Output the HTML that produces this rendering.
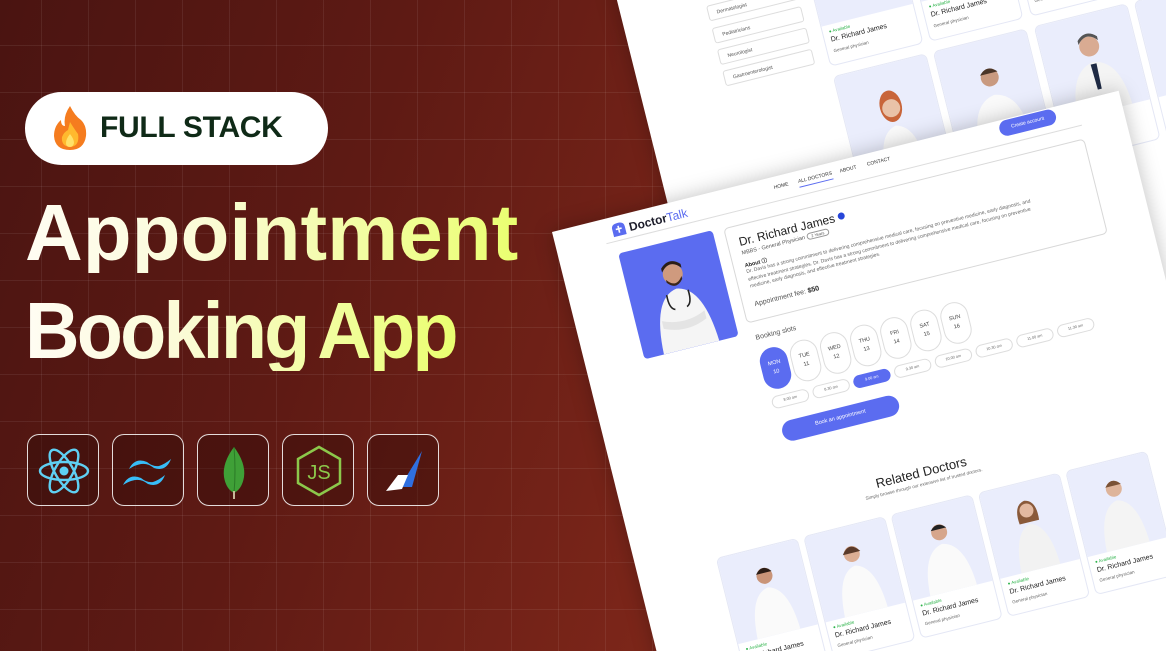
<!DOCTYPE html>
<html style="width:1166px;height:651px;overflow:hidden"><head><meta charset="utf-8">
<style>
*{margin:0;padding:0;box-sizing:border-box}
html,body{width:1166px;height:651px;overflow:hidden}
body{position:relative;font-family:"Liberation Sans",sans-serif}
.wrap{position:absolute;left:0;top:0;width:1166px;height:651px;overflow:hidden;
background:linear-gradient(110deg,#4a1411 0%,#5e1a14 30%,#7a2519 60%,#8f3321 100%)}
.grid{position:absolute;inset:0;background-image:linear-gradient(rgba(255,255,255,.07) 1px,transparent 1px),linear-gradient(90deg,rgba(255,255,255,.07) 1px,transparent 1px);background-size:47px 47px;background-position:-6px -2px}
.badge{position:absolute;left:25px;top:92px;width:303px;height:73px;background:#fff;border-radius:37px}
.badge span{position:absolute;left:75px;top:19px;font-size:30px;font-weight:bold;color:#0f2a17;letter-spacing:-.3px}
.t{position:absolute;left:25px;font-size:80px;font-weight:bold;line-height:1;white-space:nowrap;
background:linear-gradient(90deg,#fffdf3 0%,#fbfbd8 35%,#eaff70 100%);-webkit-background-clip:text;background-clip:text;color:transparent}
.ic{position:absolute;top:434px;width:72px;height:72px;border:1.5px solid rgba(255,255,255,.85);border-radius:12px;background:rgba(40,8,6,.35)}
.ic svg{position:absolute;left:0;top:0}
.pg{position:absolute;background:#fff;transform-origin:0 0;transform:rotate(-14deg);font-family:"Liberation Sans",sans-serif;color:#222;box-shadow:0 0 20px rgba(0,0,0,.25);overflow:hidden}
.a{position:absolute}
.card{position:absolute;width:84px;height:128px;border:1px solid #e4e7f5;border-radius:6px;background:#fff;overflow:hidden}
.card .im{position:absolute;left:0;top:0;width:100%;height:88px;background:#eaedfc}
.card .av{position:absolute;left:6px;top:92px;font-size:4.5px;color:#2db34a}
.card .nm{position:absolute;left:6px;top:100px;font-size:7px;color:#222}
.card .sp{position:absolute;left:6px;top:111px;font-size:4.5px;color:#666}
.box{position:absolute;width:92px;height:16px;border:1px solid #ddd;border-radius:3px;font-size:5px;color:#555;padding:5px 8px}
.day{position:absolute;width:28px;height:42px;border:1px solid #ddd;border-radius:14px;font-size:5.5px;text-align:center;padding-top:11px;line-height:9px;color:#444}
.tm{position:absolute;width:38px;height:13px;border:1px solid #ddd;border-radius:7px;font-size:3.8px;text-align:center;line-height:11px;color:#666}
</style></head><body><div class="wrap">
<div class="grid"></div>

<!-- back page -->
<div class="pg" style="left:587px;top:-120px;width:900px;height:900px;">
  <div class="box" style="left:85px;top:128px">General physician</div>
  <div class="box" style="left:85px;top:151px">Dermatologist</div>
  <div class="box" style="left:85px;top:174px">Pediatricians</div>
  <div class="box" style="left:85px;top:196px">Neurologist</div>
  <div class="box" style="left:85px;top:218px">Gastroenterologist</div>
  <div class="card" style="left:191px;top:100px;width:96px;height:140px"><div class="im" style="height:98px"></div><div class="av" style="top:102px">● Available</div><div class="nm" style="top:110px">Dr. Richard James</div><div class="sp" style="top:122px">General physician</div></div>
  <div class="card" style="left:294px;top:100px;width:96px;height:140px"><div class="im" style="height:98px"></div><div class="av" style="top:102px">● Available</div><div class="nm" style="top:110px">Dr. Richard James</div><div class="sp" style="top:122px">General physician</div></div>
  <div class="card" style="left:398px;top:100px;width:96px;height:140px"><div class="im" style="height:98px"></div><div class="av" style="top:102px">● Available</div><div class="nm" style="top:110px">Dr. Richard James</div><div class="sp" style="top:122px">General physician</div></div>
  <div class="card" style="left:501px;top:100px;width:96px;height:140px"><div class="im" style="height:98px"></div></div>
  <div class="card" style="left:604px;top:100px;width:96px;height:140px"><div class="im" style="height:98px"></div></div>
  <div class="card" style="left:191px;top:250px;width:96px;height:140px"><div class="im" style="height:98px"><svg width="96" height="98" viewBox="0 0 96 98"><path d="M28 98 Q30 66 48 62 Q66 66 68 98Z" fill="#fafafa"/><ellipse cx="48" cy="42" rx="11" ry="16" fill="#c8653a"/><circle cx="48" cy="44" r="9" fill="#e9c2a8"/></svg></div></div>
  <div class="card" style="left:294px;top:250px;width:96px;height:140px"><div class="im" style="height:98px"><svg width="96" height="98" viewBox="0 0 96 98"><path d="M22 98 Q24 60 48 56 Q72 60 74 98Z" fill="#fafafa"/><circle cx="48" cy="38" r="9" fill="#c99a80"/><path d="M39 34 Q48 24 57 34Z" fill="#4a3528"/></svg></div></div>
  <div class="card" style="left:398px;top:250px;width:96px;height:140px"><div class="im" style="height:98px"><svg width="96" height="98" viewBox="0 0 96 98"><path d="M20 98 Q22 52 48 48 Q74 52 76 98Z" fill="#f4f4f4"/><path d="M45 50 L51 50 L50 76 L46 76Z" fill="#1e2a44"/><circle cx="48" cy="32" r="10" fill="#d9ab92"/><path d="M38 28 Q48 16 58 28 L58 24 Q48 14 38 24Z" fill="#555"/></svg></div><div class="av" style="top:102px">● Available</div><div class="nm" style="top:110px">Dr. Richard James</div></div>
  <div class="card" style="left:501px;top:250px;width:96px;height:140px"><div class="im" style="height:98px"></div><div class="av" style="top:102px">● Available</div><div class="nm" style="top:110px">Dr. Richard James</div></div>
  <div class="card" style="left:604px;top:250px;width:96px;height:140px"><div class="im" style="height:98px"></div></div>
  <div class="card" style="left:604px;top:400px;width:96px;height:140px"><div class="im" style="height:98px"></div><div class="av" style="top:102px">● Available</div><div class="nm" style="top:110px">Dr. Richard James</div></div>
  <div class="card" style="left:604px;top:550px;width:96px;height:140px"><div class="im" style="height:98px"></div></div>
</div>

<!-- front page -->
<div class="pg" style="left:552px;top:232px;width:584px;height:720px;">
  <svg class="a" style="left:58px;top:6px" width="15" height="15" viewBox="0 0 15 15"><path d="M1 6 Q1 1 7.5 1 Q14 1 14 6 L14 14 L1 14Z" fill="#5b6cf0"/><path d="M7.5 4 V11 M4.5 7 H10.5" stroke="#fff" stroke-width="1.6"/></svg>
  <div class="a" style="left:76px;top:7px;font-size:12px;font-weight:bold;color:#1d1d2b">Doctor<span style="color:#5b6cf0;font-weight:normal">Talk</span></div>
  <div class="a" style="left:226px;top:8px;font-size:5px;color:#333">HOME</div>
  <div class="a" style="left:251px;top:8px;font-size:5px;color:#333;border-bottom:1px solid #5b6cf0;padding-bottom:2px">ALL DOCTORS</div>
  <div class="a" style="left:294px;top:8px;font-size:5px;color:#333">ABOUT</div>
  <div class="a" style="left:322px;top:8px;font-size:5px;color:#333">CONTACT</div>
  <div class="a" style="left:459px;top:1px;width:58px;height:16px;border-radius:8px;background:#5b6cf0;color:#fff;font-size:5px;text-align:center;line-height:16px">Create account</div>
  <div class="a" style="left:50px;top:24px;width:490px;height:1px;background:#ddd"></div>

  <div class="a" style="left:59px;top:37px;width:97px;height:109px;background:#5b6cf0;border-radius:4px;overflow:hidden">
    <svg width="97" height="109" viewBox="0 0 97 109"><path d="M20 109 Q22 52 48 48 Q74 52 77 109Z" fill="#f5f5f5"/><path d="M26 76 Q48 86 70 76 L70 84 Q48 94 26 84Z" fill="#e4e4e4"/><circle cx="48" cy="33" r="10" fill="#cf9a7e"/><path d="M38 29 Q48 17 58 29 L58 25 Q48 15 38 25Z" fill="#2b1d16"/><path d="M40 37 Q48 48 56 37 L56 40 Q48 50 40 40Z" fill="#3a261c"/><path d="M37 52 Q36 66 42 68 M59 52 Q60 66 54 68" stroke="#222" stroke-width="1.6" fill="none"/></svg>
  </div>

  <div class="a" style="left:167px;top:38px;width:372px;height:98px;border:1px solid #d8d8d8;border-radius:5px">
    <div class="a" style="left:11px;top:9px;font-size:12px;color:#222;white-space:nowrap">Dr. Richard James <span style="display:inline-block;width:7px;height:7px;border-radius:50%;background:#2746d9;vertical-align:1px"></span></div>
    <div class="a" style="left:11px;top:25px;font-size:5.5px;color:#555;white-space:nowrap">MBBS - General Physician <span style="border:1px solid #999;border-radius:5px;padding:0 4px;font-size:4px">2 Years</span></div>
    <div class="a" style="left:11px;top:36px;font-size:5.5px;color:#222;font-weight:bold">About ⓘ</div>
    <div class="a" style="left:11px;top:44px;width:310px;font-size:5px;line-height:7.5px;color:#666">Dr. Davis has a strong commitment to delivering comprehensive medical care, focusing on preventive medicine, early diagnosis, and effective treatment strategies. Dr. Davis has a strong commitment to delivering comprehensive medical care, focusing on preventive medicine, early diagnosis, and effective treatment strategies.</div>
    <div class="a" style="left:11px;top:77px;font-size:7px;color:#555;white-space:nowrap">Appointment fee: <b style="color:#222">$50</b></div>
  </div>

  <div class="a" style="left:172px;top:149px;font-size:7px;color:#555">Booking slots</div>
  <div class="day" style="left:170px;top:165px;background:#5b6cf0;color:#fff;border-color:#5b6cf0">MON<br>10</div>
  <div class="day" style="left:201px;top:165px">TUE<br>11</div>
  <div class="day" style="left:232px;top:165px">WED<br>12</div>
  <div class="day" style="left:263px;top:165px">THU<br>13</div>
  <div class="day" style="left:294px;top:165px">FRI<br>14</div>
  <div class="day" style="left:325px;top:165px">SAT<br>15</div>
  <div class="day" style="left:356px;top:165px">SUN<br>16</div>
  <div class="tm" style="left:172px;top:213px">8.00 am</div>
  <div class="tm" style="left:214px;top:213px">8.30 am</div>
  <div class="tm" style="left:256px;top:213px;background:#5b6cf0;color:#fff;border-color:#5b6cf0">9.00 am</div>
  <div class="tm" style="left:298px;top:213px">9.30 am</div>
  <div class="tm" style="left:340px;top:213px">10.00 am</div>
  <div class="tm" style="left:382px;top:213px">10.30 am</div>
  <div class="tm" style="left:424px;top:213px">11.00 am</div>
  <div class="tm" style="left:466px;top:213px">11.30 am</div>
  <div class="a" style="left:175px;top:240px;width:120px;height:21px;border-radius:11px;background:#5b6cf0;color:#fff;font-size:5.5px;text-align:center;line-height:21px">Book an appointment</div>

  <div class="a" style="left:200px;top:315px;width:200px;text-align:center;font-size:13px;color:#222">Related Doctors</div>
  <div class="a" style="left:200px;top:332px;width:200px;text-align:center;font-size:4.6px;color:#666">Simply browse through our extensive list of trusted doctors.</div>

  <div class="card" style="left:80px;top:356px"><div class="im"><svg width="84" height="88" viewBox="0 0 84 88"><path d="M20 88 Q22 44 42 40 Q62 44 64 88Z" fill="#fafafa"/><circle cx="42" cy="28" r="8" fill="#c99478"/><path d="M34 25 Q42 15 50 25Z" fill="#2b1d16"/></svg></div><div class="av">● Available</div><div class="nm">Dr. Richard James</div><div class="sp">General physician</div></div>
  <div class="card" style="left:170px;top:356px"><div class="im"><svg width="84" height="88" viewBox="0 0 84 88"><path d="M20 88 Q22 44 42 40 Q62 44 64 88Z" fill="#fafafa"/><circle cx="42" cy="28" r="8" fill="#dcae94"/><path d="M33 27 Q42 14 51 27Z" fill="#5a3a2a"/></svg></div><div class="av">● Available</div><div class="nm">Dr. Richard James</div><div class="sp">General physician</div></div>
  <div class="card" style="left:260px;top:356px"><div class="im"><svg width="84" height="88" viewBox="0 0 84 88"><path d="M18 88 Q20 44 42 40 Q64 44 66 88Z" fill="#fafafa"/><circle cx="42" cy="28" r="8" fill="#d6a68c"/><path d="M34 25 Q42 16 50 25Z" fill="#222"/></svg></div><div class="av">● Available</div><div class="nm">Dr. Richard James</div><div class="sp">General physician</div></div>
  <div class="card" style="left:350px;top:356px"><div class="im"><svg width="84" height="88" viewBox="0 0 84 88"><path d="M22 88 Q24 46 42 42 Q60 46 62 88Z" fill="#f2f2f2"/><path d="M32 40 Q30 20 42 18 Q54 20 52 40Z" fill="#8a5a3a"/><circle cx="42" cy="28" r="7" fill="#e3b9a0"/></svg></div><div class="av">● Available</div><div class="nm">Dr. Richard James</div><div class="sp">General physician</div></div>
  <div class="card" style="left:440px;top:356px"><div class="im"><svg width="84" height="88" viewBox="0 0 84 88"><path d="M20 88 Q22 44 42 40 Q62 44 64 88Z" fill="#f4f4f4"/><circle cx="42" cy="28" r="8" fill="#deb49a"/><path d="M34 25 Q42 15 50 25Z" fill="#7a5236"/></svg></div><div class="av">● Available</div><div class="nm">Dr. Richard James</div><div class="sp">General physician</div></div>
</div>

<!-- left side -->
<div class="badge">
  <svg style="position:absolute;left:26px;top:12px" width="38" height="48" viewBox="0 0 38 48"><path d="M19 2 Q24 12 30 16 Q36 22 35 32 Q33 46 19 46 Q4 46 3 32 Q3 22 10 16 Q10 22 14 22 Q12 12 19 2Z" fill="#f57c1f"/><path d="M19 18 Q24 26 27 30 Q29 42 19 43 Q10 42 11 33 Q13 28 17 26 Q18 22 19 18Z" fill="#ffb92e"/><path d="M19 30 Q23 35 23 39 Q22 43 19 43 Q15 43 15 39 Q15 35 19 30Z" fill="#ffe169"/></svg>
  <span>FULL STACK</span>
</div>
<div class="t" style="top:193px;letter-spacing:0px">Appointment</div>
<div class="t" style="top:291px;letter-spacing:-3px;word-spacing:-6px;transform:scaleX(0.945);transform-origin:0 0">Booking App</div>

<div class="ic" style="left:27px"><svg width="72" height="72" viewBox="0 0 72 72"><g fill="none" stroke="#5fd0f3" stroke-width="2.4"><ellipse cx="36" cy="36" rx="24" ry="9"/><ellipse cx="36" cy="36" rx="24" ry="9" transform="rotate(60 36 36)"/><ellipse cx="36" cy="36" rx="24" ry="9" transform="rotate(-60 36 36)"/></g><circle cx="36" cy="36" r="4.5" fill="#5fd0f3"/></svg></div>
<div class="ic" style="left:112px"><svg width="72" height="72" viewBox="0 0 72 72"><path d="M16 34 Q22 22 34 27 Q40 32 46 31 Q52 29 58 24 Q53 37 41 33 Q35 28 28 29 Q22 30 16 34Z" fill="#38bdf8"/><path d="M10 50 Q16 38 28 43 Q34 48 40 47 Q46 45 52 40 Q47 53 35 49 Q29 44 22 45 Q16 46 10 50Z" fill="#38bdf8"/></svg></div>
<div class="ic" style="left:197px"><svg width="72" height="72" viewBox="0 0 72 72"><path d="M36 12 Q48 28 46 42 Q44 54 36 58 Q28 54 26 42 Q24 28 36 12Z" fill="#3fa037"/><path d="M36 12 Q38 36 36 58" stroke="#2b7a27" stroke-width="1" fill="none"/><path d="M36 56 V64" stroke="#c8b89a" stroke-width="2"/></svg></div>
<div class="ic" style="left:282px"><svg width="72" height="72" viewBox="0 0 72 72"><path d="M36 12 L57 24 L57 48 L36 60 L15 48 L15 24Z" fill="none" stroke="#8cc84b" stroke-width="2.5"/><text x="36" y="44" text-anchor="middle" font-family="Liberation Sans" font-size="20" fill="#8cc84b">JS</text></svg></div>
<div class="ic" style="left:367px"><svg width="72" height="72" viewBox="0 0 72 72"><path d="M54 16 L44 52 L32 52 Z" fill="#2f6fe0"/><path d="M30 40 L40 40 L34 54 L18 56 Z" fill="#fff"/></svg></div>
</div></body></html>
